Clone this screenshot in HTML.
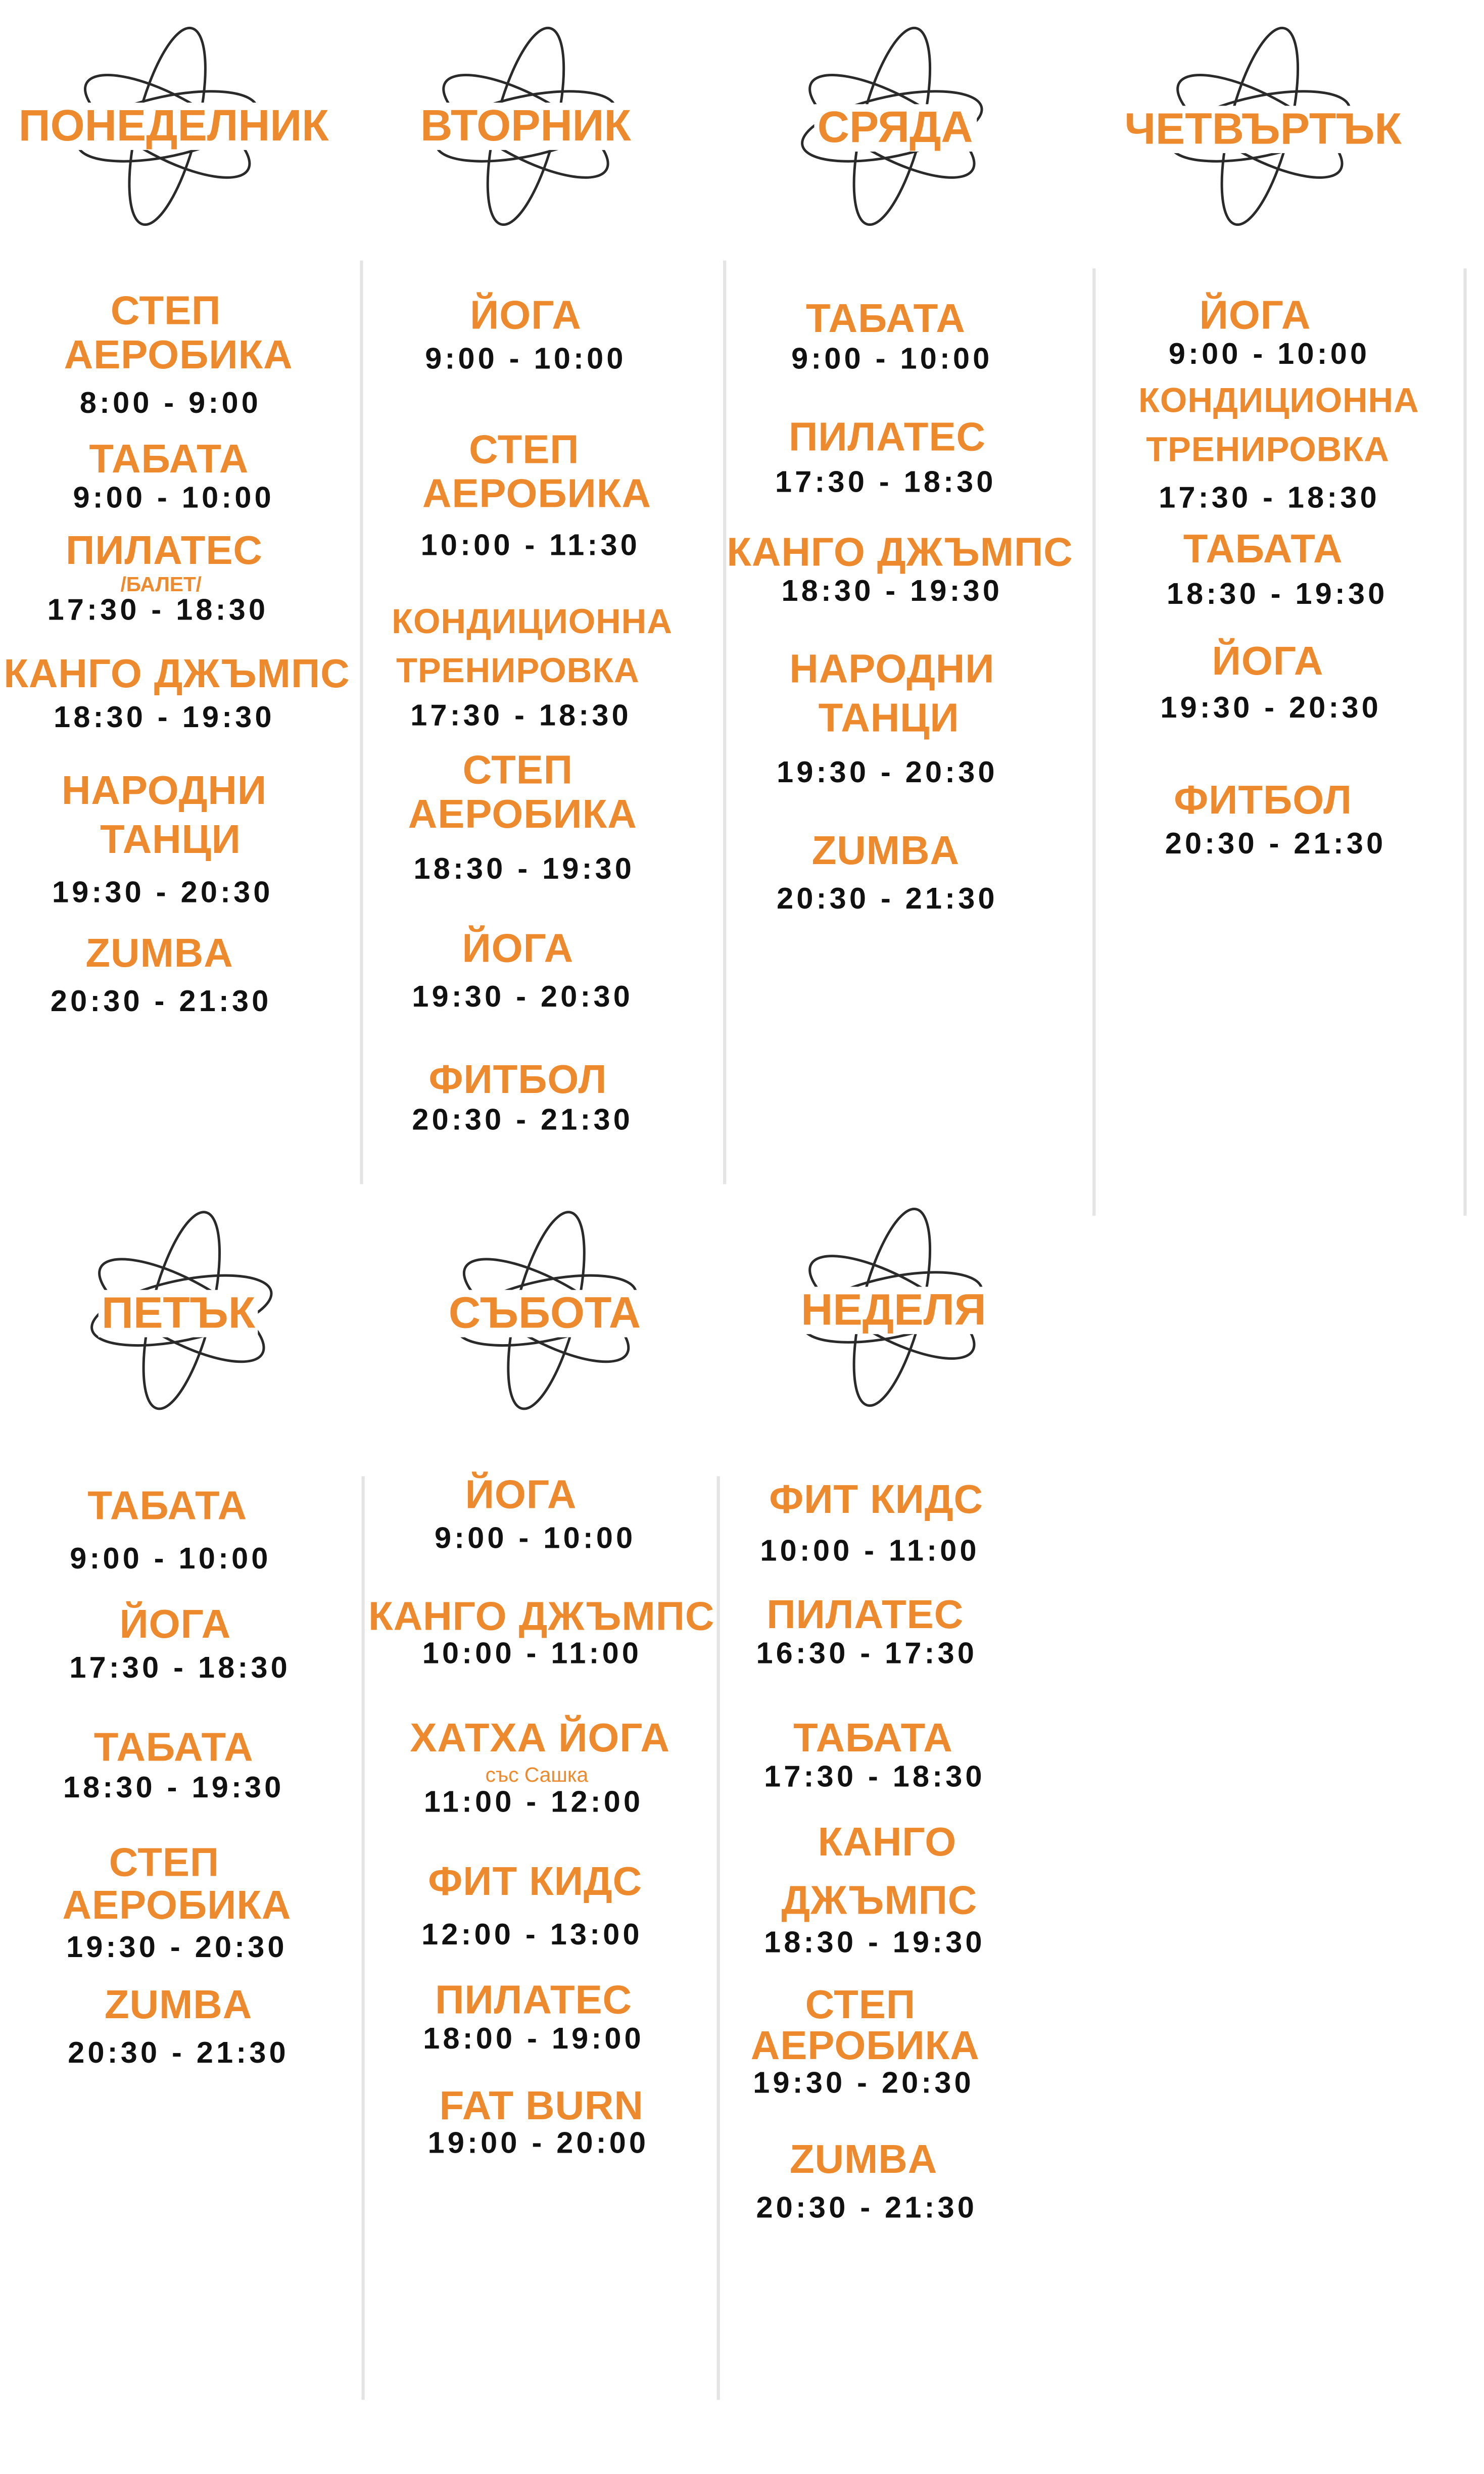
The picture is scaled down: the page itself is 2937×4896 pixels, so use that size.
<!DOCTYPE html>
<html><head><meta charset="utf-8"><style>
html,body{margin:0;padding:0;background:#fff;width:2937px;height:4895px;overflow:hidden}
#w{position:absolute;left:0;top:0;width:940px;height:1567px;transform:scale(3.1245);transform-origin:0 0}
.t{position:absolute;transform:translate(-50%,-50%);white-space:nowrap;font-family:"Liberation Sans","DejaVu Sans",sans-serif;font-weight:bold;line-height:1}
.o{color:#ee8a2e;font-size:25.5px;letter-spacing:.3px}
.h{color:#ee8a2e;font-size:28px;background:#fff;padding:1px 2px}
.k{color:#111;font-size:19px;letter-spacing:2px}
.s{color:#ee8a2e;font-size:13px}
.l{position:absolute;width:2px;background:#e4e4e4}
svg.a{position:absolute;width:124px;height:136px;transform:translate(-50%,-50%)}
</style></head><body><div id="w">
<svg width="0" height="0" style="position:absolute"><defs><g id="atom" fill="none" stroke="#2a2a2a" stroke-width="1.6"><ellipse cx="0" cy="0" rx="58" ry="20" transform="rotate(28)"/><ellipse cx="0" cy="0" rx="58" ry="19" transform="rotate(-12)"/><ellipse cx="0" cy="0" rx="19" ry="64" transform="rotate(14)"/></g></defs></svg>
<svg class="a" style="left:106px;top:80px" viewBox="-62 -68 124 136"><use href="#atom"/></svg>
<svg class="a" style="left:333px;top:80px" viewBox="-62 -68 124 136"><use href="#atom"/></svg>
<svg class="a" style="left:565px;top:80px" viewBox="-62 -68 124 136"><use href="#atom"/></svg>
<svg class="a" style="left:798px;top:80px" viewBox="-62 -68 124 136"><use href="#atom"/></svg>
<svg class="a" style="left:115px;top:830px" viewBox="-62 -68 124 136"><use href="#atom"/></svg>
<svg class="a" style="left:346px;top:830px" viewBox="-62 -68 124 136"><use href="#atom"/></svg>
<svg class="a" style="left:565px;top:828px" viewBox="-62 -68 124 136"><use href="#atom"/></svg>
<div class="t h" style="left:110px;top:80px">ПОНЕДЕЛНИК</div>
<div class="t h" style="left:333px;top:80px">ВТОРНИК</div>
<div class="t h" style="left:567px;top:81px">СРЯДА</div>
<div class="t h" style="left:800px;top:82px">ЧЕТВЪРТЪК</div>
<div class="t h" style="left:113px;top:832px">ПЕТЪК</div>
<div class="t h" style="left:345px;top:832px">СЪБОТА</div>
<div class="t h" style="left:566px;top:830px">НЕДЕЛЯ</div>
<div class="l" style="left:228px;top:165px;height:585px"></div>
<div class="l" style="left:458px;top:165px;height:585px"></div>
<div class="l" style="left:692px;top:170px;height:600px"></div>
<div class="l" style="left:927px;top:170px;height:600px"></div>
<div class="l" style="left:229px;top:935px;height:585px"></div>
<div class="l" style="left:454px;top:935px;height:585px"></div>

<div class="t o" style="left:105px;top:198px">СТЕП</div>
<div class="t o" style="left:113px;top:226px">АЕРОБИКА</div>
<div class="t k" style="left:108px;top:256px">8:00 - 9:00</div>
<div class="t o" style="left:107px;top:292px">ТАБАТА</div>
<div class="t k" style="left:110px;top:316px">9:00 - 10:00</div>
<div class="t o" style="left:104px;top:350px">ПИЛАТЕС</div>
<div class="t s" style="left:102px;top:370px">/БАЛЕТ/</div>
<div class="t k" style="left:100px;top:387px">17:30 - 18:30</div>
<div class="t o" style="left:112px;top:428px">КАНГО ДЖЪМПС</div>
<div class="t k" style="left:104px;top:455px">18:30 - 19:30</div>
<div class="t o" style="left:104px;top:502px">НАРОДНИ</div>
<div class="t o" style="left:108px;top:533px">ТАНЦИ</div>
<div class="t k" style="left:103px;top:566px">19:30 - 20:30</div>
<div class="t o" style="left:101px;top:605px">ZUMBA</div>
<div class="t k" style="left:102px;top:635px">20:30 - 21:30</div>

<div class="t o" style="left:333px;top:201px">ЙОГА</div>
<div class="t k" style="left:333px;top:228px">9:00 - 10:00</div>
<div class="t o" style="left:332px;top:286px">СТЕП</div>
<div class="t o" style="left:340px;top:314px">АЕРОБИКА</div>
<div class="t k" style="left:336px;top:346px">10:00 - 11:30</div>
<div class="t o" style="left:337px;top:394px;font-size:22px">КОНДИЦИОННА</div>
<div class="t o" style="left:328px;top:425px;font-size:22px">ТРЕНИРОВКА</div>
<div class="t k" style="left:330px;top:454px">17:30 - 18:30</div>
<div class="t o" style="left:328px;top:489px">СТЕП</div>
<div class="t o" style="left:331px;top:517px">АЕРОБИКА</div>
<div class="t k" style="left:332px;top:551px">18:30 - 19:30</div>
<div class="t o" style="left:328px;top:602px">ЙОГА</div>
<div class="t k" style="left:331px;top:632px">19:30 - 20:30</div>
<div class="t o" style="left:328px;top:685px">ФИТБОЛ</div>
<div class="t k" style="left:331px;top:710px">20:30 - 21:30</div>

<div class="t o" style="left:561px;top:203px">ТАБАТА</div>
<div class="t k" style="left:565px;top:228px">9:00 - 10:00</div>
<div class="t o" style="left:562px;top:278px">ПИЛАТЕС</div>
<div class="t k" style="left:561px;top:306px">17:30 - 18:30</div>
<div class="t o" style="left:570px;top:351px">КАНГО ДЖЪМПС</div>
<div class="t k" style="left:565px;top:375px">18:30 - 19:30</div>
<div class="t o" style="left:565px;top:425px">НАРОДНИ</div>
<div class="t o" style="left:563px;top:456px">ТАНЦИ</div>
<div class="t k" style="left:562px;top:490px">19:30 - 20:30</div>
<div class="t o" style="left:561px;top:540px">ZUMBA</div>
<div class="t k" style="left:562px;top:570px">20:30 - 21:30</div>

<div class="t o" style="left:795px;top:201px">ЙОГА</div>
<div class="t k" style="left:804px;top:225px">9:00 - 10:00</div>
<div class="t o" style="left:810px;top:254px;font-size:22px">КОНДИЦИОННА</div>
<div class="t o" style="left:803px;top:285px;font-size:22px">ТРЕНИРОВКА</div>
<div class="t k" style="left:804px;top:316px">17:30 - 18:30</div>
<div class="t o" style="left:800px;top:349px">ТАБАТА</div>
<div class="t k" style="left:809px;top:377px">18:30 - 19:30</div>
<div class="t o" style="left:803px;top:420px">ЙОГА</div>
<div class="t k" style="left:805px;top:449px">19:30 - 20:30</div>
<div class="t o" style="left:800px;top:508px">ФИТБОЛ</div>
<div class="t k" style="left:808px;top:535px">20:30 - 21:30</div>

<div class="t o" style="left:106px;top:955px">ТАБАТА</div>
<div class="t k" style="left:108px;top:988px">9:00 - 10:00</div>
<div class="t o" style="left:111px;top:1030px">ЙОГА</div>
<div class="t k" style="left:114px;top:1057px">17:30 - 18:30</div>
<div class="t o" style="left:110px;top:1108px">ТАБАТА</div>
<div class="t k" style="left:110px;top:1133px">18:30 - 19:30</div>
<div class="t o" style="left:104px;top:1181px">СТЕП</div>
<div class="t o" style="left:112px;top:1208px">АЕРОБИКА</div>
<div class="t k" style="left:112px;top:1234px">19:30 - 20:30</div>
<div class="t o" style="left:113px;top:1271px">ZUMBA</div>
<div class="t k" style="left:113px;top:1301px">20:30 - 21:30</div>

<div class="t o" style="left:330px;top:948px">ЙОГА</div>
<div class="t k" style="left:339px;top:975px">9:00 - 10:00</div>
<div class="t o" style="left:343px;top:1025px">КАНГО ДЖЪМПС</div>
<div class="t k" style="left:337px;top:1048px">10:00 - 11:00</div>
<div class="t o" style="left:342px;top:1102px">ХАТХА ЙОГА</div>
<div class="t s" style="left:340px;top:1124px;font-weight:normal">със Сашка</div>
<div class="t k" style="left:338px;top:1142px">11:00 - 12:00</div>
<div class="t o" style="left:339px;top:1193px">ФИТ КИДС</div>
<div class="t k" style="left:337px;top:1226px">12:00 - 13:00</div>
<div class="t o" style="left:338px;top:1268px">ПИЛАТЕС</div>
<div class="t k" style="left:338px;top:1292px">18:00 - 19:00</div>
<div class="t o" style="left:343px;top:1335px">FAT BURN</div>
<div class="t k" style="left:341px;top:1358px">19:00 - 20:00</div>

<div class="t o" style="left:555px;top:951px">ФИТ КИДС</div>
<div class="t k" style="left:551px;top:983px">10:00 - 11:00</div>
<div class="t o" style="left:548px;top:1024px">ПИЛАТЕС</div>
<div class="t k" style="left:549px;top:1048px">16:30 - 17:30</div>
<div class="t o" style="left:553px;top:1102px">ТАБАТА</div>
<div class="t k" style="left:554px;top:1126px">17:30 - 18:30</div>
<div class="t o" style="left:562px;top:1168px">КАНГО</div>
<div class="t o" style="left:557px;top:1205px">ДЖЪМПС</div>
<div class="t k" style="left:554px;top:1231px">18:30 - 19:30</div>
<div class="t o" style="left:545px;top:1271px">СТЕП</div>
<div class="t o" style="left:548px;top:1297px">АЕРОБИКА</div>
<div class="t k" style="left:547px;top:1320px">19:30 - 20:30</div>
<div class="t o" style="left:547px;top:1369px">ZUMBA</div>
<div class="t k" style="left:549px;top:1399px">20:30 - 21:30</div>
</div></body></html>
